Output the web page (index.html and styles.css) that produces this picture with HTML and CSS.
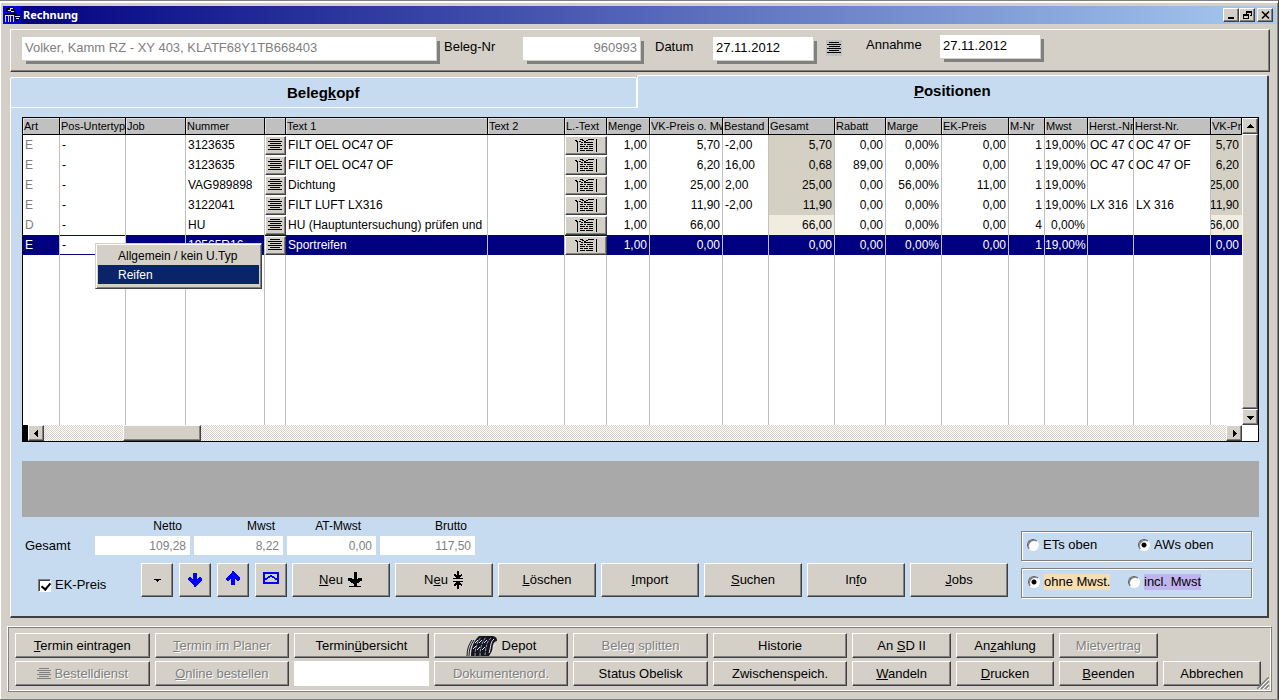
FILE: index.html
```html
<!DOCTYPE html>
<html lang="de">
<head>
<meta charset="utf-8">
<title>Rechnung</title>
<link rel="stylesheet" href="styles.css">
</head>
<body>
<svg class="defs" aria-hidden="true">
  <symbol id="lines" viewBox="0 0 16 14"><path d="M3 1.5h10M1 3.5h14M3 5.5h11M1 7.5h14M3 9.5h10M1 11.5h14" stroke="currentColor" fill="none"/></symbol>
  <symbol id="note" viewBox="0 0 24 15"><path d="M1 2.5h2M2 3.5h2M3.5 3v11M5 3.500h2M6 1.500h3M8 2.500h2M10 3.500h2M12 2.500h2M14 1.500h6M7 4.500h2M10 4.500h9M6 6.500h3M10 6.500h2M13 6.500h6M6 8.500h5M12 8.500h2M15 8.500h4M6 10.500h3M10 10.500h4M15 10.500h4M6 12.500h5M12 12.500h7M22.500 1v13" stroke="#000" fill="none"/></symbol>
  <symbol id="arrow" viewBox="0 0 16 16"><path d="M6 1h4v6l3-2 2 1v2l-6 6v1H7v-1L1 8V6l2-1 3 2z" fill="currentColor"/></symbol>
</svg>
<div class="window">
  <header class="titlebar">
    <svg class="app-icon" viewBox="0 0 18 18"><rect width="18" height="18" fill="#0000e0"/><path d="M4 6V3h2V2h4v2M7 5h4v3M2 8h9M12 8l2 2h3M12 12h5M12 14h3" stroke="#000" stroke-width="2" fill="none"/><path d="M5 4h2v-2h3M8 5h3M2 9h9M2.500 10v6M5 10v6M7.500 10v6M10 10v6M12 10h5M13 12h3" stroke="#ddd" fill="none"/></svg>
    <h1>Rechnung</h1>
    <div class="window-buttons">
      <button aria-label="Minimieren"><svg viewBox="0 0 13 10"><path d="M3 8h6" stroke="#000" stroke-width="2"/></svg></button>
      <button aria-label="Wiederherstellen"><svg viewBox="0 0 13 10"><path d="M5.500 4V1.500h5v4H9M5 2h6M2.500 4.500h5v4h-5zM2 5h6" stroke="#000" fill="none"/></svg></button>
      <button class="close" aria-label="Schließen"><svg viewBox="0 0 13 10" class="smooth"><path d="M3 1.500l7 7M10 1.500l-7 7" stroke="#000" stroke-width="1.600"/></svg></button>
    </div>
  </header>

  <section class="head-panel">
    <input class="field customer" aria-label="Kunde" value="Volker, Kamm RZ - XY 403, KLATF68Y1TB668403" disabled>
    <label class="l-number" for="nr">Beleg-Nr</label>
    <input class="field number" id="nr" value="960993" disabled>
    <label class="l-date" for="datum">Datum</label>
    <input class="field date" id="datum" value="27.11.2012">
    <button class="date-list" aria-label="Datumsliste"><svg><use href="#lines"/></svg></button>
    <div class="arrival"><label for="annahme">Annahme</label><input class="field date" id="annahme" value="27.11.2012"></div>
  </section>

  <nav class="tabs">
    <button class="tab">Beleg<u>k</u>opf</button>
    <button class="tab active"><u>P</u>ositionen</button>
  </nav>

  <main class="page">
    <div class="grid">
      <div class="grid-view">
        <table>
          <colgroup><col class="c-art"><col class="c-typ"><col class="c-job"><col class="c-num"><col class="c-pick"><col class="c-text"><col class="c-wide"><col class="c-lt"><col class="c-43"><col class="c-vk"><col class="c-46"><col class="c-sum"><col class="c-rab"><col class="c-mar"><col class="c-ek"><col class="c-mnr"><col class="c-43"><col class="c-46"><col class="c-wide"><col class="c-last"></colgroup>
          <thead><tr><th>Art</th><th>Pos-Untertyp</th><th>Job</th><th>Nummer</th><th></th><th>Text 1</th><th>Text 2</th><th>L.-Text</th><th>Menge</th><th>VK-Preis o. Mwst</th><th>Bestand</th><th>Gesamt</th><th>Rabatt</th><th>Marge</th><th>EK-Preis</th><th>M-Nr</th><th>Mwst</th><th>Herst.-Nr.</th><th>Herst-Nr.</th><th>VK-Preis</th></tr></thead>
          <tbody>
            <tr><td class="art">E</td><td>-</td><td></td><td>3123635</td><td class="b"><button class="cell-btn" aria-label="Auswahl"><svg class="i-lines"><use href="#lines"/></svg></button></td><td>FILT OEL OC47 OF</td><td></td><td class="b"><button class="cell-btn" aria-label="Langtext"><svg class="i-note"><use href="#note"/></svg></button></td><td class="n">1,00</td><td class="n">5,70</td><td>-2,00</td><td class="n sum">5,70</td><td class="n">0,00</td><td class="n">0,00%</td><td class="n">0,00</td><td class="n">1</td><td class="n">19,00%</td><td>OC 47 OF</td><td>OC 47 OF</td><td class="n sum">5,70</td></tr>
            <tr><td class="art">E</td><td>-</td><td></td><td>3123635</td><td class="b"><button class="cell-btn" aria-label="Auswahl"><svg class="i-lines"><use href="#lines"/></svg></button></td><td>FILT OEL OC47 OF</td><td></td><td class="b"><button class="cell-btn" aria-label="Langtext"><svg class="i-note"><use href="#note"/></svg></button></td><td class="n">1,00</td><td class="n">6,20</td><td>16,00</td><td class="n sum">0,68</td><td class="n">89,00</td><td class="n">0,00%</td><td class="n">0,00</td><td class="n">1</td><td class="n">19,00%</td><td>OC 47 OF</td><td>OC 47 OF</td><td class="n sum">6,20</td></tr>
            <tr><td class="art">E</td><td>-</td><td></td><td>VAG989898</td><td class="b"><button class="cell-btn" aria-label="Auswahl"><svg class="i-lines"><use href="#lines"/></svg></button></td><td>Dichtung</td><td></td><td class="b"><button class="cell-btn" aria-label="Langtext"><svg class="i-note"><use href="#note"/></svg></button></td><td class="n">1,00</td><td class="n">25,00</td><td>2,00</td><td class="n sum">25,00</td><td class="n">0,00</td><td class="n">56,00%</td><td class="n">11,00</td><td class="n">1</td><td class="n">19,00%</td><td></td><td></td><td class="n sum">25,00</td></tr>
            <tr><td class="art">E</td><td>-</td><td></td><td>3122041</td><td class="b"><button class="cell-btn" aria-label="Auswahl"><svg class="i-lines"><use href="#lines"/></svg></button></td><td>FILT LUFT LX316</td><td></td><td class="b"><button class="cell-btn" aria-label="Langtext"><svg class="i-note"><use href="#note"/></svg></button></td><td class="n">1,00</td><td class="n">11,90</td><td>-2,00</td><td class="n sum">11,90</td><td class="n">0,00</td><td class="n">0,00%</td><td class="n">0,00</td><td class="n">1</td><td class="n">19,00%</td><td>LX 316</td><td>LX 316</td><td class="n sum">11,90</td></tr>
            <tr><td class="art">D</td><td>-</td><td></td><td>HU</td><td class="b"><button class="cell-btn" aria-label="Auswahl"><svg class="i-lines"><use href="#lines"/></svg></button></td><td>HU (Hauptuntersuchung) prüfen und</td><td></td><td class="b"><button class="cell-btn" aria-label="Langtext"><svg class="i-note"><use href="#note"/></svg></button></td><td class="n">1,00</td><td class="n">66,00</td><td></td><td class="n sum pale">66,00</td><td class="n">0,00</td><td class="n">0,00%</td><td class="n">0,00</td><td class="n">4</td><td class="n">0,00%</td><td></td><td></td><td class="n sum pale">66,00</td></tr>
            <tr class="selected"><td>E</td><td class="edit"><input aria-label="Pos-Untertyp" value="-"></td><td></td><td>19565R16</td><td class="b"><button class="cell-btn" aria-label="Auswahl"><svg class="i-lines"><use href="#lines"/></svg></button></td><td>Sportreifen</td><td></td><td class="b"><button class="cell-btn" aria-label="Langtext"><svg class="i-note"><use href="#note"/></svg></button></td><td class="n">1,00</td><td class="n">0,00</td><td></td><td class="n">0,00</td><td class="n">0,00</td><td class="n">0,00%</td><td class="n">0,00</td><td class="n">1</td><td class="n">19,00%</td><td></td><td></td><td class="n">0,00</td></tr>
            <tr class="filler"><td></td><td></td><td></td><td></td><td></td><td></td><td></td><td></td><td></td><td></td><td></td><td></td><td></td><td></td><td></td><td></td><td></td><td></td><td></td><td></td></tr>
          </tbody>
        </table>
        <div class="vscroll">
          <button aria-label="Nach oben"><svg viewBox="0 0 9 9"><path d="M4 2h1v1h1v1h1v1h1v1H1V5h1V4h1V3h1z"/></svg></button>
          <div class="thumb"></div>
          <button aria-label="Nach unten"><svg viewBox="0 0 9 9"><path d="M4 7h1V6h1V5h1V4h1V3H1v1h1v1h1v1h1z"/></svg></button>
        </div>
      </div>
      <div class="hscroll">
        <div class="split"></div>
        <button aria-label="Nach links"><svg viewBox="0 0 9 9"><path d="M2 4h1V3h1V2h1V1h1v7H5V7H4V6H3V5H2z"/></svg></button>
        <div class="track"><div class="thumb"></div></div>
        <button aria-label="Nach rechts"><svg viewBox="0 0 9 9"><path d="M7 4H6V3H5V2H4V1H3v7h1V7h1V6h1V5h1z"/></svg></button>
        <div class="corner"></div>
      </div>
      <ul class="menu" role="menu">
        <li><button role="menuitem">Allgemein / kein U.Typ</button></li>
        <li><button role="menuitem" class="current">Reifen</button></li>
      </ul>
    </div>

    <div class="info-bar"></div>

    <div class="summary">
      <div class="left">
        <div class="totals">
          <span class="totals-title">Gesamt</span>
          <div class="total wide"><label for="netto">Netto</label><input id="netto" value="109,28" disabled></div>
          <div class="total"><label for="mwst">Mwst</label><input id="mwst" value="8,22" disabled></div>
          <div class="total at"><label for="at">AT-Mwst</label><input id="at" value="0,00" disabled></div>
          <div class="total wide"><label for="brutto">Brutto</label><input id="brutto" value="117,50" disabled></div>
        </div>
        <div class="toolbar">
          <label class="check"><input type="checkbox" checked>EK-Preis</label>
          <div class="squares">
            <button class="btn square" aria-label="Menü"><svg class="i-9" viewBox="0 0 9 9"><path d="M4 6h1V5h1V4h2V3H1v1h2v1h1z"/></svg></button>
            <button class="btn square" aria-label="Nach unten"><svg class="i-16 blue"><use href="#arrow"/></svg></button>
            <button class="btn square raised" aria-label="Nach oben"><svg class="i-16 blue flip"><use href="#arrow"/></svg></button>
            <button class="btn square raised" aria-label="Umschlag"><svg class="i-16 blue" viewBox="0 0 16 16"><path d="M1 3h14v10H1z" fill="none" stroke="currentColor" stroke-width="2"/><path d="M2 10V8h2V7h1V6h2V5h2v1h2v1h1v1h2v2h-2V9h-1V8h-2V7H7v1H5v1H4v1z" fill="currentColor"/></svg></button>
          </div>
          <button class="btn"><span><u>N</u>eu</span><svg class="i-16" viewBox="0 0 16 16"><path d="M6.500 0h3v7.500L13 5.500l2 1v2L9.500 12v1.500h-3V12L1 8.500v-2l2-1 3.500 2zM2 14h12v1H2z"/></svg></button>
          <button class="btn"><span>N<u>e</u>u</span><svg class="i-neu2" viewBox="0 0 12 18"><path d="M5 0h2v4l3-1v2L7 7h4v1H1V7h4L2 5V3l3 1zM1 10h10v1H7l3 2v2l-3-1v4H5v-4l-3 1v-2l3-2H1z"/></svg></button>
          <button class="btn"><span><u>L</u>öschen</span></button>
          <button class="btn"><span><u>I</u>mport</span></button>
          <button class="btn"><span><u>S</u>uchen</span></button>
          <button class="btn"><span>In<u>f</u>o</span></button>
          <button class="btn"><span><u>J</u>obs</span></button>
        </div>
      </div>
      <div class="options">
        <div class="group" role="radiogroup" aria-label="Reihenfolge">
          <label><input type="radio" name="order"><span>ETs oben</span></label>
          <label><input type="radio" name="order" checked><span>AWs oben</span></label>
        </div>
        <div class="group tax" role="radiogroup" aria-label="Mehrwertsteuer">
          <label><input type="radio" name="tax" checked><span class="excl">ohne Mwst.</span></label>
          <label><input type="radio" name="tax"><span class="incl">incl. Mwst</span></label>
        </div>
      </div>
    </div>
  </main>

  <footer class="actions">
    <button class="btn"><span><u>T</u>ermin eintragen</span></button>
    <button class="btn" disabled><span><u>T</u>ermin im Planer</span></button>
    <button class="btn"><span>Termin<u>ü</u>bersicht</span></button>
    <button class="btn"><svg class="tyre" viewBox="0 0 32 20"><path d="M5 20C5 12 8 4 13 0h14c4 1 4 3 4 5-5 1-4 6-5 10l-3 5z" fill="#15151f"/><path d="M9 20c0-8 2-14 6-19M14 20c0-8 2-14 6-19M25 2c-5 4-5 10-6 17" stroke="#9a9eb4" fill="none" stroke-dasharray="3 1"/><path d="M7 13l3-3M9 7l3-3M11 14l3-3M13 7l3-3M16 14l3-3M18 7l3-3" stroke="#e4e4ee" fill="none"/><path d="M28 3c-4 3-3 9-5 14M30 8l-3 3M29 12l-3 4" stroke="#e4e4ee" fill="none"/><path d="M1 20c0-7 2-12 5-16M3 20c0-7 2-12 5-16" stroke="#15151f" fill="none"/></svg><span>Depot</span></button>
    <button class="btn" disabled><span>Beleg splitten</span></button>
    <button class="btn"><span>Historie</span></button>
    <button class="btn"><span>An <u>S</u>D II</span></button>
    <button class="btn"><span>An<u>z</u>ahlung</span></button>
    <button class="btn" disabled><span>Mietvertrag</span></button>
    <span></span>
    <button class="btn order" disabled><svg class="i-lines"><use href="#lines"/></svg><span>Bestelldienst</span></button>
    <button class="btn" disabled><span><u>O</u>nline bestellen</span></button>
    <input class="blank" aria-label="Eingabe">
    <button class="btn" disabled><span>Dokumentenord.</span></button>
    <button class="btn"><span>Status Obelisk</span></button>
    <button class="btn"><span>Zwischenspeich.</span></button>
    <button class="btn"><span><u>W</u>andeln</span></button>
    <button class="btn"><span><u>D</u>rucken</span></button>
    <button class="btn"><span><u>B</u>eenden</span></button>
    <button class="btn"><span>Abbrechen</span></button>
    <svg class="grip" viewBox="0 0 12 12"><path d="M0 12L12 0M4 12l8-8M8 12l4-4" stroke="#808080" stroke-width="1.500"/><path d="M2 12L12 2M6 12l6-6M10 12l2-2" stroke="#fff"/></svg>
  </footer>
</div>
</body>
</html>
```
FILE: styles.css
```css
* { box-sizing: border-box; }

body {
  margin: 0;
  background: #d4d0c8;
  color: #000;
  font: 13px/16px "Liberation Sans", Arial, sans-serif;
}

button, input { font: inherit; color: inherit; margin: 0; border-radius: 0; }
button { padding: 0; border: 0; background: none; }
svg { display: block; shape-rendering: crispEdges; }
.defs { position: absolute; width: 0; height: 0; }
.smooth, .tyre, .grip { shape-rendering: auto; }

.window {
  display: flex;
  flex-direction: column;
  min-height: 100vh;
  padding: 1px 0 0 1px;
  border-top: 1px solid #808080;
  border-right: 1px solid #404040;
  border-bottom: 1px solid #808080;
  box-shadow: inset 1px 2px 0 #fff, inset -1px 0 0 #808080;
}

/* Title bar */
.titlebar {
  display: flex;
  align-items: center;
  height: 18px;
  margin: 4px 2px 0;
  background: linear-gradient(90deg, #000080, #a6caf0);
}
.app-icon { width: 18px; height: 18px; }
h1 {
  flex: 1;
  margin: 0 0 0 2px;
  color: #fff;
  font: bold 11px/18px "Noto Sans", "DejaVu Sans", sans-serif;
}
.window-buttons { display: flex; margin-right: 3px; }
.window-buttons button, .vscroll button, .hscroll button {
  display: flex;
  align-items: center;
  justify-content: center;
  width: 16px;
  height: 14px;
  background: #d4d0c8;
  border: 1px solid;
  border-color: #fff #404040 #404040 #fff;
  box-shadow: inset -1px -1px 0 #808080;
}
.window-buttons svg { width: 13px; height: 10px; }
.window-buttons .close { margin-left: 2px; }

/* Document head */
.head-panel {
  display: flex;
  align-items: center;
  height: 43px;
  margin: 5px 8px 0 9px;
  padding: 0 0 4px 11px;
  border: 1px solid #404040;
  border-color: #fff #404040 #404040 #fff;
  box-shadow: inset -1px -1px 0 #808080;
}
.head-panel label { padding-bottom: 3px; }
.field {
  height: 23px;
  padding: 0 3px 2px;
  border: 0;
  background: #fff;
  box-shadow: 1px 1px 0 #d4d0c8, 4px 4px 0 #808080;
}
.field:disabled { color: #808080; }
.customer { flex: 1; min-width: 200px; }
.number { width: 117px; text-align: right; }
.date { width: 100px; }
.l-number { width: 79px; margin-left: 8px; }
.l-date { width: 58px; margin-left: 15px; }
.date-list { width: 16px; height: 16px; margin: 0 24px 2px 13px; background: #c0c0c0; }
.date-list svg { width: 16px; height: 14px; }
.arrival { display: flex; align-items: center; padding: 0 229px 4px 0; }
.arrival label { width: 74px; }

/* Tabs */
.tabs { display: flex; align-items: flex-end; margin: 3px 9px 0; }
.tab {
  flex: 627;
  height: 31px;
  background: #c6dbef;
  border: 1px solid #fff;
  border-radius: 2px 2px 0 0;
  font-size: 15px;
  font-weight: bold;
}
.tab.active {
  flex: 632;
  height: 33px;
  padding-bottom: 2px;
  border-right: 2px solid #404040;
  border-bottom: 0;
}

.page {
  margin: 0 9px;
  padding: 9px 8px 18px 11px;
  background: #c6dbef;
  border: solid #404040;
  border-width: 0 2px 2px 1px;
  border-left-color: #fff;
}

/* Positions grid */
.grid { position: relative; background: #fff; border: 1px solid #000; }
.grid-view { display: flex; }
table {
  flex: 1;
  width: 0;
  table-layout: fixed;
  border-collapse: separate;
  border-spacing: 0;
  font-size: 12px;
}
.c-art { width: 37px; } .c-typ { width: 66px; } .c-job { width: 60px; }
.c-num { width: 79px; } .c-pick { width: 21px; } .c-text { width: 202px; }
.c-wide { width: 77px; } .c-lt { width: 42px; } .c-43 { width: 43px; }
.c-vk { width: 73px; } .c-46 { width: 46px; } .c-sum { width: 66px; }
.c-rab { width: 51px; } .c-mar { width: 56px; } .c-ek { width: 67px; }
.c-mnr { width: 36px; } .c-last { width: 31px; }
th {
  height: 17px;
  padding: 0 0 0 1px;
  overflow: hidden;
  background: #c0c0c0;
  border-right: 1px solid #000;
  border-bottom: 1px solid #000;
  box-shadow: inset 1px 1px 0 #e0e0e0;
  font-size: 11px;
  font-weight: normal;
  line-height: 16px;
  text-align: left;
  white-space: nowrap;
}
td {
  height: 20px;
  padding: 0 0 0 2px;
  overflow: hidden;
  border-right: 1px solid #c0c0c0;
  line-height: 20px;
  white-space: nowrap;
}
td.art { color: #808080; }
td.n { padding: 0 2px 0 0; text-align: right; }
td:last-child { border-right: 0; }
td.n:last-child { padding-right: 3px; direction: rtl; }
td.b { padding: 0; border-right: 0; }
td.sum { background: #d4d0c4; }
td.pale { background: #f0ece0; }
.selected td { background: #000080; color: #fff; }
.selected .edit { padding: 1px 0; }
.edit input {
  display: block;
  width: 100%;
  height: 18px;
  padding: 0 2px;
  border: 0;
  background: #fff;
  color: #000;
}
.filler td { height: 170px; }
.cell-btn {
  display: flex;
  align-items: center;
  justify-content: center;
  width: 100%;
  height: 19px;
  padding-right: 1px;
  background: #d4d0c8;
  border: 1px solid;
  border-color: #fff #404040 #404040 #fff;
  box-shadow: inset -1px -1px 0 #808080;
  color: #000;
}
.i-lines { flex: none; width: 16px; height: 14px; }
.i-note { width: 24px; height: 15px; }

.vscroll { display: flex; flex-direction: column; width: 16px; background: #d4d0c8; }
.vscroll button { height: 16px; }
.vscroll svg, .hscroll svg, .i-9 { width: 9px; height: 9px; }
.thumb {
  flex: 1;
  background: #d4d0c8;
  border: 1px solid;
  border-color: #fff #404040 #404040 #fff;
  box-shadow: inset -1px -1px 0 #808080;
}
.hscroll { display: flex; height: 16px; }
.hscroll button { height: 16px; }
.split { width: 5px; background: #000; }
.track { flex: 1; background: repeating-conic-gradient(#d4d0c8 0 25%, #fff 0 50%) 0 0 / 2px 2px; }
.track .thumb { width: 78px; height: 16px; margin-left: 79px; }
.corner { width: 16px; background: #fff; }

.menu {
  position: absolute;
  top: 125px;
  left: 72px;
  width: 167px;
  margin: 0;
  padding: 2px 2px 4px;
  list-style: none;
  background: #d4d0c8;
  border: 1px solid;
  border-color: #d4d0c8 #404040 #404040 #d4d0c8;
  box-shadow: inset 1px 1px 0 #fff, inset -1px -1px 0 #808080;
}
.menu button {
  display: block;
  width: 100%;
  height: 19px;
  padding-left: 20px;
  font-size: 12px;
  text-align: left;
}
.menu .current { background: #0a246a; color: #fff; }

.info-bar { height: 56px; margin-top: 19px; background: #a9a9a9; }

/* Totals, tools and options */
.summary { display: flex; justify-content: space-between; }
.totals { display: flex; align-items: flex-end; gap: 4px; font-size: 12px; }
.totals-title { width: 69px; padding-left: 3px; font-size: 13px; line-height: 18px; }
.total { width: 89px; }
.total.wide { width: 95px; }
.total label { display: block; padding-right: 8px; line-height: 19px; text-align: right; }
.total.at label { padding-right: 15px; }
.total input {
  display: block;
  width: 100%;
  height: 19px;
  padding: 0 4px;
  border: 0;
  background: #fff;
  color: #808080;
  text-align: right;
}
.toolbar { display: flex; gap: 5px; margin-top: 8px; }
.squares { display: flex; gap: 6px; }
.check { display: flex; align-items: center; width: 114px; padding: 10px 0 0 16px; gap: 4px; }
.check input {
  appearance: none;
  width: 13px;
  height: 13px;
  background: #fff;
  border: 1px solid;
  border-color: #808080 #fff #fff #808080;
  box-shadow: inset 1px 1px 0 #404040;
}
.check input:checked::before {
  content: "";
  display: block;
  width: 4px;
  height: 7px;
  margin: 1px 0 0 4px;
  border: solid #000;
  border-width: 0 2px 2px 0;
  rotate: 40deg;
}
.btn {
  display: flex;
  align-items: center;
  justify-content: center;
  gap: 4px;
  min-width: 0;
  height: 25px;
  overflow: hidden;
  background: #d4d0c8;
  border: 1px solid;
  border-color: #fff #404040 #404040 #fff;
  box-shadow: inset -1px -1px 0 #808080;
  white-space: nowrap;
}
.toolbar .btn { width: 98px; height: 34px; }
.toolbar .square { width: 32px; }
.raised { padding-bottom: 4px; }
.i-16 { width: 16px; height: 16px; }
.i-neu2 { width: 12px; height: 18px; }
.blue { color: #00f; }
.flip { rotate: 180deg; }
.btn:disabled { color: #808080; text-shadow: 1px 1px 0 #fff; }

.options {
  display: flex;
  flex-direction: column;
  gap: 7px;
  width: 231px;
  margin: 14px 7px 0 4px;
}
.group {
  display: grid;
  grid-template-columns: 111px auto;
  align-items: center;
  height: 30px;
  padding: 0 5px 2px;
  border: 1px solid #808080;
  box-shadow: 1px 1px 0 #fff, inset 1px 1px 0 #fff;
}
.group.tax { grid-template-columns: 100px auto; padding-left: 6px; }
.group label { display: flex; align-items: center; gap: 4px; }
.group input {
  appearance: none;
  width: 12px;
  height: 12px;
  border: 1px solid;
  border-color: #606060 #fff #fff #606060;
  border-radius: 50%;
  background: #fff;
  box-shadow: inset 1px 1px 0 #808080;
}
.group input:checked { background: radial-gradient(circle, #000 0 2px, #fff 3px); }
.excl { background: #f5deb3; }
.incl { background: #c0b4f0; }

/* Action bar */
.actions {
  position: relative;
  display: grid;
  grid-template-columns: repeat(6, minmax(0, 134fr)) repeat(4, minmax(0, 98fr));
  gap: 3px 5px;
  margin: 8px 6px 7px;
  padding: 6px 10px 5px 7px;
  border: 1px solid;
  border-color: #fff #808080 #808080 #fff;
  box-shadow: inset 1px 1px 0 #808080, inset -1px -1px 0 #fff;
}
.order { gap: 2px; }
.tyre { width: 32px; height: 20px; }
.blank { width: 100%; min-width: 0; height: 25px; padding: 0 4px; border: 0; background: #fff; }
.grip { position: absolute; right: 2px; bottom: 2px; width: 12px; height: 12px; }
```
